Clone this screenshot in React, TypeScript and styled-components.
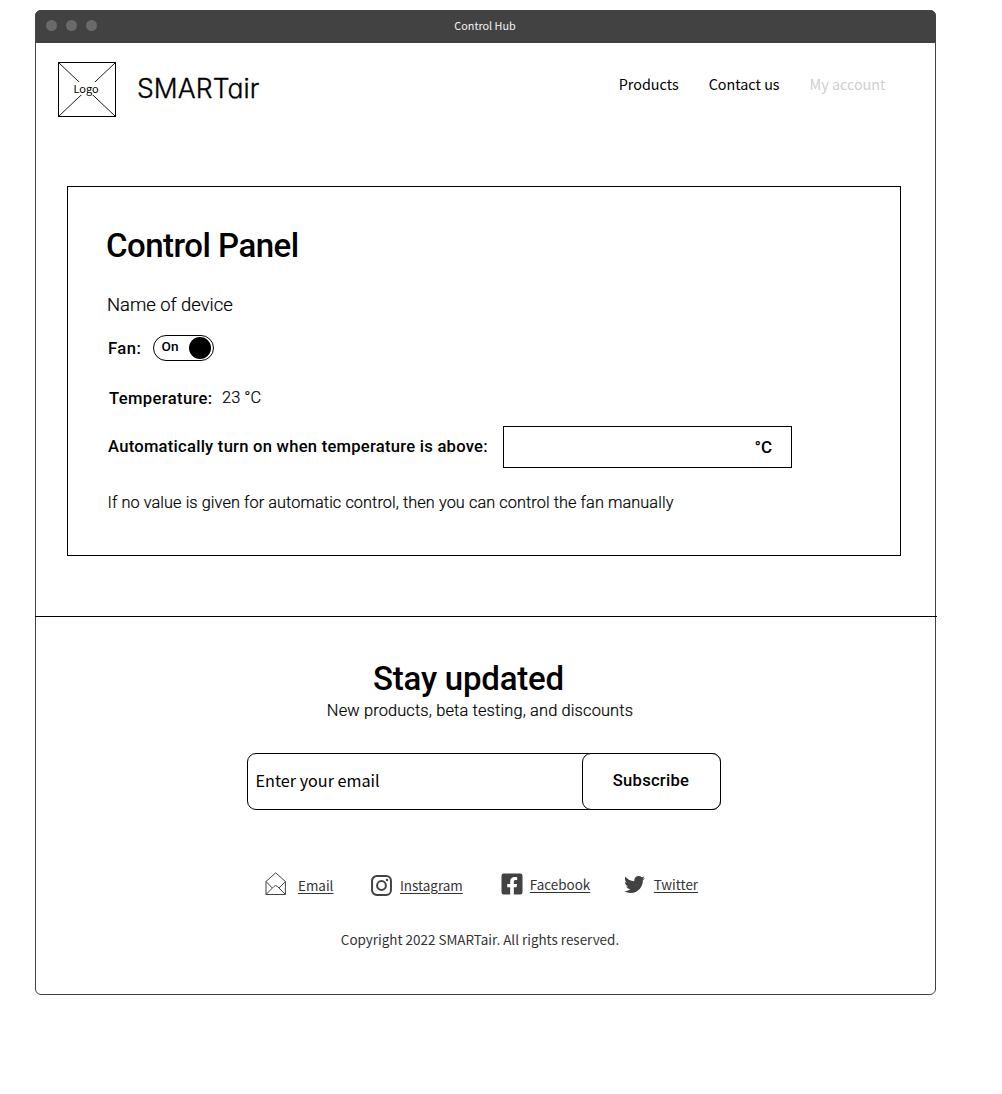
import React, { useState } from "react";
import styled, { createGlobalStyle, css } from "styled-components";
import { FaFacebookSquare, FaTwitter } from "react-icons/fa";

const ui = `"Roboto", "Liberation Sans", sans-serif`;
const source = `"Noto Sans CJK SC", "Noto Sans", sans-serif`;

const GlobalStyle = createGlobalStyle`
  *, *::before, *::after { box-sizing: border-box; }
  body { margin: 0; background: #fff; color: #000; font-family: ${ui}; }
  h1, h2, p { margin: 0; }
`;

const Page = styled.div`
  padding: 10px 66px 99px 35px;
`;

const Window = styled.div`
  height: 985px;
  border: 1px solid #424242;
  border-radius: 6px;
  display: flex;
  flex-direction: column;
`;

const TitleBar = styled.div`
  margin: -1px -1px 0;
  height: 33px;
  flex: none;
  display: grid;
  grid-template-columns: 1fr auto 1fr;
  align-items: center;
  padding: 0 11px;
  background: #424242;
  border-radius: 6px 6px 0 0;
`;

const Lights = styled.div`
  display: flex;
  gap: 9px;
  padding-bottom: 3px;
`;

const Light = styled.span`
  width: 11px;
  height: 11px;
  border-radius: 50%;
  background: #6a6a6a;
`;

const WindowTitle = styled.span`
  font: 400 10.8px/16px ${source};
  color: #f4f4f4;
  padding: 0 1px 3px 0;
`;

const Header = styled.header`
  display: flex;
  align-items: flex-start;
  padding: 19px 49.5px 0 22px;
  height: 143px;
  flex: none;
`;

const LogoBox = styled.div`
  width: 58px;
  height: 55px;
  border: 1px solid #000;
  display: grid;
  place-items: center;

  > * { grid-area: 1 / 1; }
`;

const LogoLabel = styled.span`
  font: 400 11px/13px ${source};
  background: #fff;
  margin: 0 2px 2px 0;
`;

const Brand = styled.span`
  margin: 10px 0 0 21px;
  font: 300 26.5px/32px "Inter", sans-serif;
  font-feature-settings: "cv11";
  letter-spacing: 0.1px;
  -webkit-text-stroke: 0.35px #000;
`;

const Nav = styled.nav`
  display: flex;
  gap: 30px;
  margin: 11px 0 0 auto;
`;

const NavLink = styled.a<{ $muted?: boolean }>`
  font: 400 14.35px/22px ${source};
  color: ${(p) => (p.$muted ? "#cfcfcf" : "#000")};
`;

const Panel = styled.section`
  width: 834px;
  height: 370px;
  flex: none;
  margin-left: 31px;
  padding: 39px 38px 0 39px;
  border: 1px solid #000;
`;

const heading = css`
  font: 500 33px/40px ${ui};
  white-space: nowrap;
`;

const lightText = css`
  font-family: ${ui};
  font-weight: 300;
  line-height: 24px;
  -webkit-text-stroke: 0.2px #000;
`;

const PanelTitle = styled.h1`
  ${heading}
  letter-spacing: -0.52px;
  margin-left: -1px;
`;

const Device = styled.p`
  ${lightText}
  margin-top: 27px;
  font-size: 18.4px;
`;

const FieldRow = styled.div<{ $top: number; $height: number }>`
  display: flex;
  align-items: center;
  height: ${(p) => p.$height}px;
  margin-top: ${(p) => p.$top}px;
`;

const Label = styled.span<{ $spacing?: number; $indent?: number; $drop?: number }>`
  font: 500 16.6px/24px ${ui};
  letter-spacing: ${(p) => p.$spacing ?? 0.25}px;
  white-space: nowrap;
  padding-left: ${(p) => p.$indent ?? 1}px;
  margin-top: ${(p) => p.$drop ?? 0}px;
`;

const Toggle = styled.button`
  display: flex;
  justify-content: space-between;
  align-items: center;
  width: 61px;
  height: 26px;
  margin: 0 0 0 12px;
  padding: 0 2px 0 7px;
  border: 1px solid #000;
  border-radius: 13px;
  background: #fff;
  color: #000;
`;

const ToggleText = styled.span`
  font: 500 13.6px/16px ${ui};
  letter-spacing: 0.2px;
  padding-bottom: 4px;
`;

const Knob = styled.span`
  width: 22px;
  height: 22px;
  border-radius: 50%;
  background: #000;
`;

const Reading = styled.span`
  ${lightText}
  font-size: 16.4px;
  margin: -1px 0 0 9.5px;
`;

const Threshold = styled.div`
  display: flex;
  align-items: center;
  width: 289px;
  height: 42px;
  margin-left: auto;
  margin-right: 70px;
  border: 1px solid #000;
  padding-right: 19px;
`;

const ThresholdInput = styled.input`
  flex: 1;
  min-width: 0;
  height: 38px;
  border: 0;
  outline: 0;
  background: transparent;
  padding: 0 12px;
  font: 400 16px ${ui};
`;

const Unit = styled.span`
  font: 500 17px/24px ${ui};
`;

const Hint = styled.p`
  ${lightText}
  margin-top: 23px;
  font-size: 16.3px;
  letter-spacing: 0.08px;
  padding-left: 0.5px;
`;

const Footer = styled.footer`
  flex: 1;
  margin: 60px -2px 0 -1px;
  border-top: 1px solid #000;
  padding: 42px 0 0;
  display: flex;
  flex-direction: column;
`;

const Intro = styled.div`
  display: flex;
  flex-direction: column;
  align-items: center;
  width: 867px;
`;

const FooterTitle = styled.h2`
  ${heading}
  letter-spacing: -0.22px;
`;

const FooterText = styled.p`
  ${lightText}
  font-size: 16.4px;
  letter-spacing: 0.14px;
  margin-left: 23px;
`;

const Signup = styled.form`
  display: flex;
  width: 474px;
  height: 57px;
  margin: 30px 0 0 212px;
  border: 1px solid #000;
  border-radius: 9px;
`;

const EmailInput = styled.input`
  flex: 1;
  min-width: 0;
  border: 0;
  outline: 0;
  background: transparent;
  padding: 0 7.5px 3px;
  font: 400 16.2px/24px ${source};
  color: #000;

  &::placeholder { color: #000; opacity: 1; }
`;

const SubscribeButton = styled.button`
  width: 139px;
  margin: -1px;
  padding: 0 1px 2px 0;
  border: 1px solid #000;
  border-radius: 9px;
  background: #fff;
  font: 500 16.6px/24px ${ui};
  letter-spacing: 0.25px;
  color: #000;
`;

const Socials = styled.div`
  display: flex;
  align-items: flex-start;
  margin: 62px 0 0 229.5px;
  height: 26px;
`;

const Social = styled.a<{ $gap: number; $after: number; $drop?: number }>`
  display: flex;
  gap: ${(p) => p.$gap}px;
  margin-right: ${(p) => p.$after}px;
  padding-top: ${(p) => p.$drop ?? 0}px;
  color: #424242;

  svg { flex: none; display: block; }
`;

const SocialText = styled.span<{ $top?: number }>`
  font: 400 13.45px/22px ${source};
  color: #333;
  text-decoration: underline;
  text-decoration-thickness: 1px;
  text-underline-offset: 2px;
  margin-top: ${(p) => p.$top ?? 0}px;
`;

const Copyright = styled.p`
  width: 890px;
  margin-top: 30px;
  text-align: center;
  font: 400 13.45px/22px ${source};
  color: #333;
`;

function LogoCross() {
  return (
    <svg width="56" height="53" viewBox="0 0 56 53" stroke="#000" strokeWidth="0.9">
      <path d="M0 0 56 53M56 0 0 53" />
    </svg>
  );
}

function MailIcon() {
  return (
    <svg width="22" height="24" viewBox="0 0 22 24" fill="none" stroke="#424242" strokeWidth="1" strokeLinejoin="round">
      <path d="M1 9.5 10.7 .8 20.4 9.5V22.5H1ZM1 9.5 7.3 16M20.4 9.5 14.1 16M1 22.5 9 14.4Q10.7 12.8 12.4 14.4L20.4 22.5" />
    </svg>
  );
}

function InstagramIcon() {
  return (
    <svg width="21" height="21" viewBox="0 0 22 22" fill="none" stroke="#424242">
      <rect x="1.1" y="1.1" width="19.8" height="19.8" rx="5" strokeWidth="2.1" />
      <circle cx="11" cy="11" r="4.6" strokeWidth="2.1" />
      <circle cx="16.8" cy="5.3" r="1.3" fill="#424242" stroke="none" />
    </svg>
  );
}

export default function App() {
  const [limit, setLimit] = useState("");
  const [email, setEmail] = useState("");

  return (
    <>
      <GlobalStyle />
      <Page>
        <Window>
          <TitleBar>
            <Lights>
              <Light />
              <Light />
              <Light />
            </Lights>
            <WindowTitle>Control Hub</WindowTitle>
          </TitleBar>

          <Header>
            <LogoBox>
              <LogoCross />
              <LogoLabel>Logo</LogoLabel>
            </LogoBox>
            <Brand>SMARTair</Brand>
            <Nav>
              <NavLink>Products</NavLink>
              <NavLink>Contact us</NavLink>
              <NavLink $muted>My account</NavLink>
            </Nav>
          </Header>

          <Panel>
            <PanelTitle>Control Panel</PanelTitle>
            <Device>Name of device</Device>
            <FieldRow $top={18} $height={26}>
              <Label $spacing={0.5} $drop={1}>Fan:</Label>
              <Toggle type="button">
                <ToggleText>On</ToggleText>
                <Knob />
              </Toggle>
            </FieldRow>
            <FieldRow $top={25} $height={24}>
              <Label $spacing={0.37} $indent={2} $drop={1}>Temperature:</Label>
              <Reading>23 °C</Reading>
            </FieldRow>
            <FieldRow $top={16} $height={42}>
              <Label>Automatically turn on when temperature is above:</Label>
              <Threshold>
                <ThresholdInput value={limit} onChange={(e) => setLimit(e.target.value)} />
                <Unit>°C</Unit>
              </Threshold>
            </FieldRow>
            <Hint>If no value is given for automatic control, then you can control the fan manually</Hint>
          </Panel>

          <Footer>
            <Intro>
              <FooterTitle>Stay updated</FooterTitle>
              <FooterText>New products, beta testing, and discounts</FooterText>
            </Intro>
            <Signup onSubmit={(e) => e.preventDefault()}>
              <EmailInput placeholder="Enter your email" value={email} onChange={(e) => setEmail(e.target.value)} />
              <SubscribeButton>Subscribe</SubscribeButton>
            </Signup>
            <Socials>
              <Social $gap={11.5} $after={37.5}>
                <MailIcon />
                <SocialText $top={2}>Email</SocialText>
              </Social>
              <Social $gap={8} $after={37} $drop={3}>
                <InstagramIcon />
                <SocialText $top={-1}>Instagram</SocialText>
              </Social>
              <Social $gap={6} $after={33.5}>
                <FaFacebookSquare size={24} />
                <SocialText $top={1}>Facebook</SocialText>
              </Social>
              <Social $gap={9} $after={0} $drop={2}>
                <FaTwitter size={21} />
                <SocialText $top={-1}>Twitter</SocialText>
              </Social>
            </Socials>
            <Copyright>Copyright 2022 SMARTair. All rights reserved.</Copyright>
          </Footer>
        </Window>
      </Page>
    </>
  );
}
